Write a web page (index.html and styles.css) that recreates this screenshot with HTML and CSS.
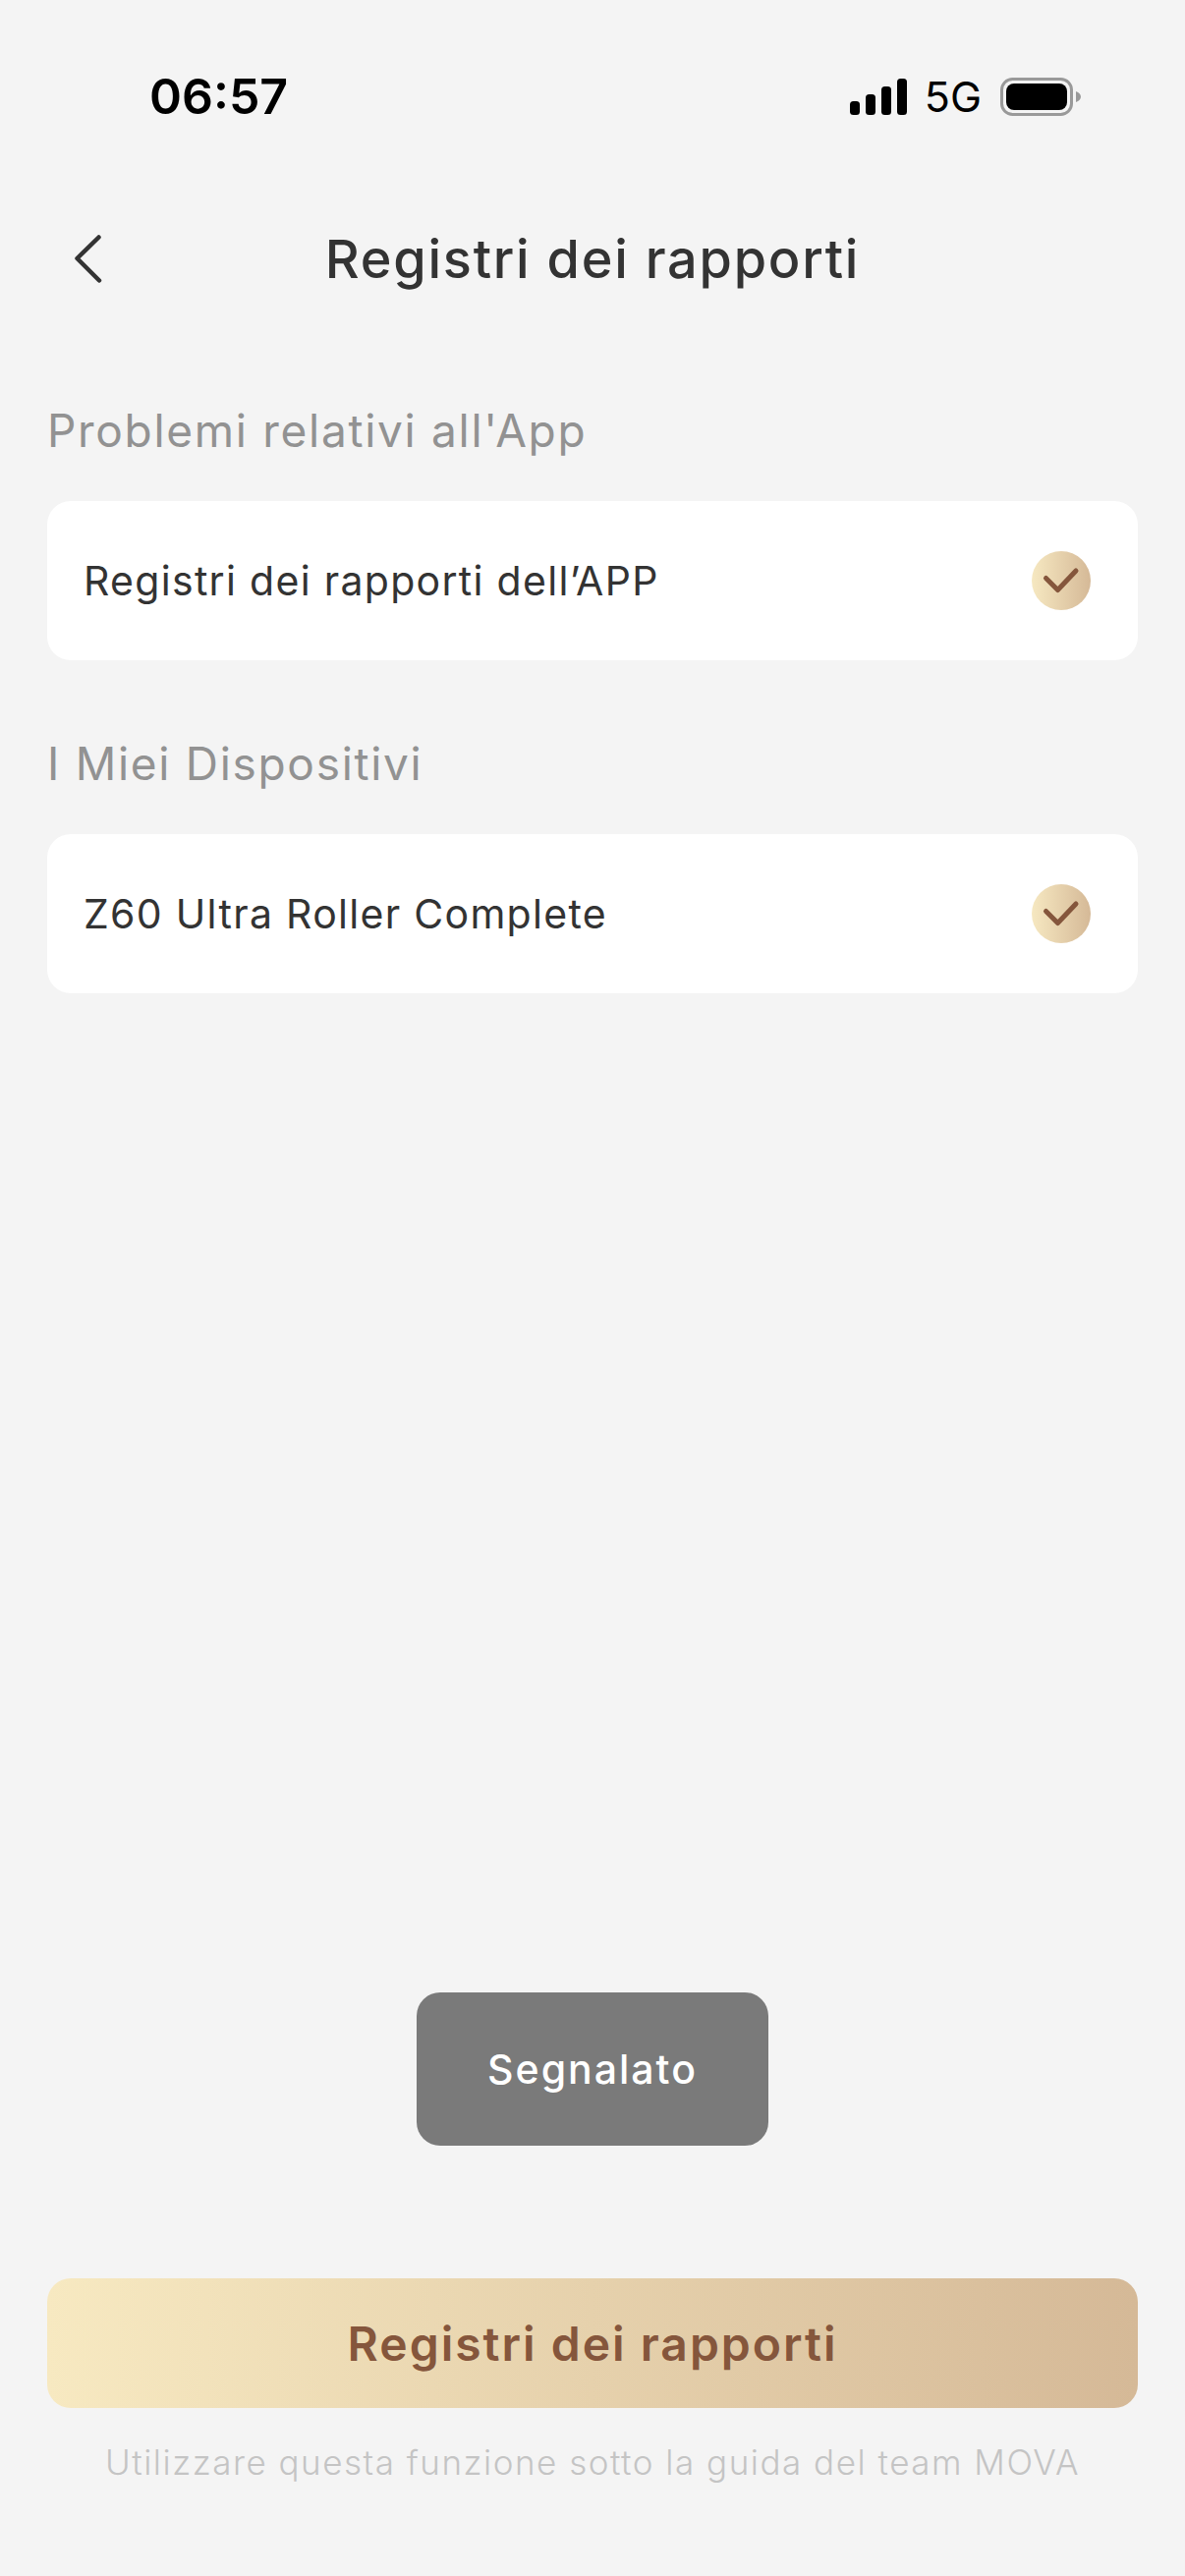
FILE: index.html
```html
<!DOCTYPE html>
<html lang="it">

<head>
    <meta charset="UTF-8">
    <meta name="viewport" content="width=device-width, initial-scale=1.0">
    <title>Registri dei rapporti</title>
    <link rel="stylesheet" href="styles.css">
</head>

<body>
    <div class="status-bar">
        <span class="time">06:57</span>
        <div class="status-icons">
            <svg class="signal" width="58" height="37" viewBox="0 0 58 37">
                <rect x="0" y="23" width="10" height="14" rx="3.5" />
                <rect x="16" y="16" width="10" height="21" rx="3.5" />
                <rect x="32" y="8" width="10" height="29" rx="3.5" />
                <rect x="48" y="0" width="10" height="37" rx="3.5" />
            </svg>
            <span class="network">5G</span>
            <svg class="battery" width="82" height="39" viewBox="0 0 82 39">
                <rect x="1.5" y="1.5" width="71" height="36" rx="11" fill="none" stroke="#999" stroke-width="3" />
                <rect x="6" y="6" width="62" height="27" rx="8" fill="#000" />
                <path d="M77 14c3 1 5 3 5 5.500s-2 4.500-5 5.500z" fill="#999" />
            </svg>
        </div>
    </div>

    <div class="header">
        <svg class="back" width="30" height="50" viewBox="0 0 30 50">
            <path d="M24.500 2.500 L2.500 24 L25 46.500" fill="none" stroke="#333" stroke-width="4.500" stroke-linecap="round" stroke-linejoin="round" />
        </svg>
        <h1>Registri dei rapporti</h1>
    </div>

    <div class="content">
        <h2>Problemi relativi all'App</h2>
        <div class="card">
            <span>Registri dei rapporti dell’APP</span>
            <svg class="check" width="60" height="60" viewBox="0 0 60 60">
                <defs>
                    <linearGradient id="gold1">
                        <stop offset="0" stop-color="#f6e8c1" />
                        <stop offset="1" stop-color="#d5b997" />
                    </linearGradient>
                </defs>
                <circle cx="30" cy="30" r="30" fill="url(#gold1)" />
                <path d="M14.500 27.500 L26.500 39.500 L45 20" fill="none" stroke="#85563c" stroke-width="5" stroke-linecap="round" stroke-linejoin="round" />
            </svg>
        </div>

        <h2>I Miei Dispositivi</h2>
        <div class="card">
            <span>Z60 Ultra Roller Complete</span>
            <svg class="check" width="60" height="60" viewBox="0 0 60 60">
                <circle cx="30" cy="30" r="30" fill="url(#gold1)" />
                <path d="M14.500 27.500 L26.500 39.500 L45 20" fill="none" stroke="#85563c" stroke-width="5" stroke-linecap="round" stroke-linejoin="round" />
            </svg>
        </div>
    </div>

    <div class="footer">
        <button type="button" class="btn">Registri dei rapporti</button>
        <p class="hint">Utilizzare questa funzione sotto la guida del team MOVA</p>
    </div>

    <div class="toast">Segnalato</div>
</body>

</html>
```

FILE: styles.css
```css
* {
    margin: 0;
    padding: 0;
    box-sizing: border-box;
    font-family: 'Inter', 'Liberation Sans', sans-serif;
}

body {
    background: #f4f4f4;
    width: 1206px;
    height: 2622px;
    display: flex;
    flex-direction: column;
    position: relative;
    overflow: hidden;
}

/* Status bar */
.status-bar {
    height: 196px;
    padding: 0 106px 0 152px;
    display: flex;
    justify-content: space-between;
    align-items: center;
}

.time {
    font-size: 50px;
    font-weight: 600;
    color: #000;
}

.status-icons {
    display: flex;
    align-items: center;
}

.signal {
    fill: #000;
}

.network {
    font-size: 43px;
    color: #000;
    margin: 0 19px 0 18px;
}

/* Header */
.header {
    height: 134px;
    padding: 0 48px;
    display: flex;
    align-items: center;
    justify-content: center;
    position: relative;
}

.header h1 {
    font-size: 54px;
    font-weight: 500;
    letter-spacing: 1.75px;
    color: #333;
}

.back {
    position: absolute;
    left: 76px;
    top: 43px;
}

/* Lists */
.content {
    padding: 80px 48px 0;
}

.content h2 {
    font-size: 46px;
    font-weight: 400;
    letter-spacing: 1.7px;
    color: #929292;
    margin-bottom: 44px;
    line-height: 56px;
}

.card {
    background: #fff;
    height: 162px;
    border-radius: 24px;
    padding: 0 48px 0 37px;
    margin-bottom: 77px;
    display: flex;
    align-items: center;
    justify-content: space-between;
    font-size: 41px;
    font-weight: 400;
    letter-spacing: 1.3px;
    color: #333;
}

/* Footer */
.footer {
    margin-top: auto;
    padding: 0 48px 95px;
    display: flex;
    flex-direction: column;
    align-items: center;
}

.btn {
    width: 100%;
    height: 132px;
    border: none;
    border-radius: 24px;
    background: linear-gradient(90deg, #f7e9c1, #d5b997);
    color: #85563c;
    font-size: 48px;
    font-weight: 600;
    letter-spacing: 2px;
}

.hint {
    margin-top: 34px;
    font-size: 35px;
    font-weight: 300;
    line-height: 42px;
    letter-spacing: 1.5px;
    color: #c4c4c4;
}

/* Toast lies over the page */
.toast {
    position: absolute;
    left: 424px;
    top: 2028px;
    width: 358px;
    height: 156px;
    border-radius: 24px;
    background: #7a7a7a;
    color: #fff;
    font-size: 41px;
    font-weight: 500;
    letter-spacing: 2px;
    display: flex;
    align-items: center;
    justify-content: center;
}
```
